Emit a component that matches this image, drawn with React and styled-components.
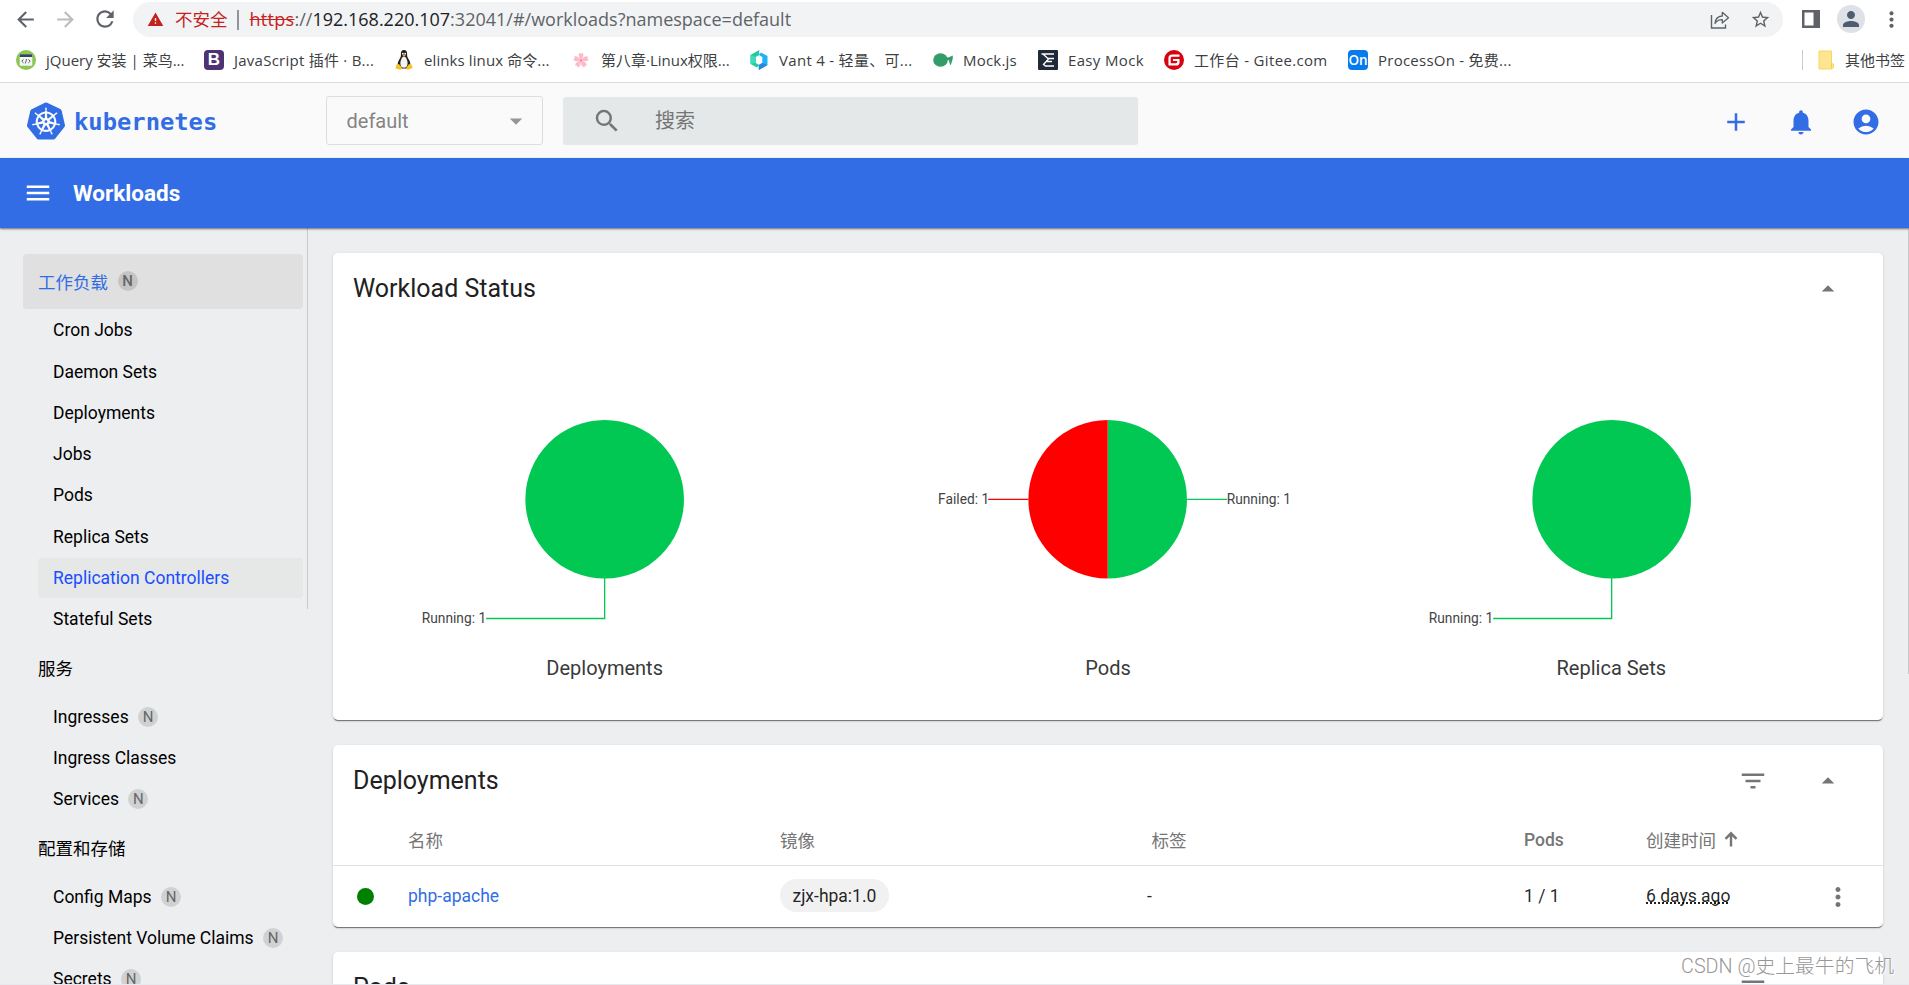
import styled, { createGlobalStyle, css } from "styled-components";
import {
  MdAccountCircle,
  MdAdd,
  MdArrowBack,
  MdArrowDropDown,
  MdArrowDropUp,
  MdArrowForward,
  MdFilterList,
  MdMenu,
  MdMoreVert,
  MdNotifications,
  MdPerson,
  MdRefresh,
  MdSearch,
  MdStarBorder,
  MdWarning,
} from "react-icons/md";
import { SiGitee, SiKubernetes } from "react-icons/si";

const GlobalStyle = createGlobalStyle`
  * {
    box-sizing: border-box;
  }

  body {
    margin: 0;
    overflow: hidden;
    font-family: Roboto, "Noto Sans CJK SC", sans-serif;
    font-size: 17.5px;
    color: rgba(0, 0, 0, 0.87);
  }

  svg {
    display: block;
    flex-shrink: 0;
  }
`;

const Page = styled.div`
  position: relative;
  width: 1909px;
  height: 985px;
  display: flex;
  flex-direction: column;
  overflow: hidden;
  background-color: #edeef0;
`;

/* ---------- browser ---------- */

const Browser = styled.div`
  flex-shrink: 0;
  height: 83px;
  background-color: #fff;
  border-bottom: 1px solid #d9dadb;
  font-family: "Open Sans", "Noto Sans CJK SC", sans-serif;
`;

const Toolbar = styled.div`
  height: 38px;
  padding-left: 5px;
  display: flex;
  align-items: center;
`;

const BrowserButton = styled.div`
  width: 40px;
  height: 38px;
  flex-shrink: 0;
  display: flex;
  justify-content: center;
  align-items: center;
  color: ${({ $disabled }) => ($disabled ? "#babcbe" : "#5f6368")};
`;

const Omnibox = styled.div`
  width: 1650px;
  height: 35px;
  flex-shrink: 0;
  margin: 1px 8px 0 8px;
  padding: 0 12px 0 14px;
  border-radius: 18px;
  display: flex;
  align-items: center;
  background-color: #f1f3f4;
  font-size: 17.5px;
  white-space: nowrap;
`;

const Insecure = styled.span`
  width: 62px;
  margin-left: 11px;
  padding-bottom: 2px;
  color: #c5221f;
`;

const OmniDivider = styled.span`
  width: 1.5px;
  height: 20px;
  margin-right: 11px;
  background-color: #909498;
`;

const Url = styled.span`
  flex: 1;
  padding-bottom: 2px;
  font-size: 18px;
  color: #5f6368;

  s {
    color: #c5221f;
    letter-spacing: 0.3px;
  }
  b {
    font-weight: 400;
    color: #202124;
  }
`;

const OmniIcons = styled.div`
  display: flex;
  align-items: center;
  gap: 20px;
  color: #5f6368;
`;

const Avatar = styled.div`
  width: 28px;
  height: 28px;
  border-radius: 50%;
  display: flex;
  justify-content: center;
  align-items: center;
  background-color: #dee1e6;
  color: #4e5b70;
`;

const BookmarkBar = styled.div`
  height: 44px;
  padding-left: 16px;
  display: flex;
  align-items: center;
  font-size: 15px;
  line-height: 20px;
  color: #3c4043;
  white-space: nowrap;
`;

const Bookmark = styled.div`
  width: ${({ $width }) => $width}px;
  flex-shrink: 0;
  display: flex;
  align-items: center;
  gap: 10px;
  letter-spacing: ${({ $track }) => $track || 0}px;
`;

const BookmarkText = styled.span`
  padding-bottom: 1px;
`;

const OtherBookmarks = styled.div`
  height: 20px;
  margin-left: auto;
  padding-left: 15px;
  padding-right: 4px;
  border-left: 1px solid #c9cbcd;
  display: flex;
  align-items: center;
  gap: 11px;
`;

const LetterIcon = styled.span`
  width: 20px;
  height: 20px;
  border-radius: 4px;
  display: flex;
  justify-content: center;
  align-items: center;
  letter-spacing: 0;
  color: #fff;
  background-color: ${({ $bg }) => $bg};
  font: ${({ $font }) => $font};
`;

/* ---------- dashboard header ---------- */

const Header = styled.header`
  flex-shrink: 0;
  height: 75px;
  padding: 0 28px 0 27px;
  display: flex;
  align-items: center;
  background-color: #fafafa;
`;

const Brand = styled.div`
  width: 299px;
  padding-top: 1px;
  display: flex;
  align-items: center;
  gap: 9px;
  color: #326de6;
  font-family: "DejaVu Sans Mono", monospace;
  font-weight: 700;
  font-size: 23.8px;
  line-height: 38px;

  span {
    padding-top: 1px;
  }
`;

const NamespaceSelect = styled.div`
  width: 217px;
  height: 49px;
  padding: 0 11px 0 19.5px;
  border: 1px solid #dedede;
  border-radius: 3px;
  display: flex;
  justify-content: space-between;
  align-items: center;
  font-size: 20px;
  color: #858585;

  svg {
    color: #969696;
  }
`;

const SearchBox = styled.div`
  width: 575px;
  height: 48px;
  margin-left: 20px;
  padding-left: 29px;
  border-radius: 3px;
  display: flex;
  align-items: center;
  gap: 33px;
  background-color: #e4e8e8;
  font-size: 20px;
  color: #757575;

  span {
    padding-bottom: 3px;
  }
`;

const HeaderActions = styled.div`
  margin-left: auto;
  padding-top: 2px;
  display: flex;
  gap: 35px;
  color: #326de6;
`;

const TitleBar = styled.div`
  position: relative;
  flex-shrink: 0;
  height: 70px;
  padding-left: 23px;
  display: flex;
  align-items: center;
  gap: 20px;
  background-color: #326de6;
  box-shadow: 0 1px 2px rgba(0, 0, 0, 0.55);
  color: #fff;

  h1 {
    margin: 0;
    font-size: 22.5px;
    font-weight: 700;
  }
`;

const Body = styled.div`
  flex: 1;
  min-height: 0;
  display: flex;
  overflow: hidden;
  border-bottom: 1px solid #e8e9ee;
`;

/* ---------- sidebar ---------- */

const Sidebar = styled.nav`
  width: 303px;
  flex-shrink: 0;
  padding: 26px 0 0 23px;
  display: flex;
  flex-direction: column;
  gap: 1.25px;
`;

const navItem = css`
  flex-shrink: 0;
  border-radius: 4px;
  padding-left: 15px;
  display: flex;
  align-items: center;
  gap: 9.5px;
  color: #000;
`;

const NavGroup = styled.div`
  ${navItem}
  height: 55px;
  ${({ $active }) =>
    $active &&
    css`
      padding-bottom: 1px;
      background-color: #e0e0e0;
      color: #326de6;
    `}
`;

const NavLink = styled.div`
  ${navItem}
  height: 40px;
  margin-left: 15px;
  ${({ $active }) =>
    $active &&
    css`
      background-color: #e5e8e7;
      color: #1a4dff;
    `}
`;

const Badge = styled.span`
  width: 20px;
  height: 20px;
  border-radius: 50%;
  display: flex;
  justify-content: center;
  align-items: center;
  background-color: rgba(0, 0, 0, 0.12);
  color: #666;
  font-size: 15px;
  font-weight: ${({ $strong }) => ($strong ? 500 : 400)};
`;

const Track = styled.div`
  flex-shrink: 0;
  width: 1px;
  height: ${({ $height }) => $height}px;
  margin-left: ${({ $gap }) => $gap}px;
  background-color: #c6c8ca;
`;

/* ---------- cards ---------- */

const Content = styled.main`
  flex: 1;
  padding: 25px 25px 0;
  display: flex;
  flex-direction: column;
  gap: 25px;
`;

const Card = styled.section`
  flex-shrink: 0;
  border-radius: 5px;
  background-color: #fff;
  box-shadow: 0 2px 1px -1px rgba(0, 0, 0, 0.4), 0 1px 1px rgba(0, 0, 0, 0.14),
    0 1px 3px rgba(0, 0, 0, 0.12);
`;

const CardHeader = styled.div`
  height: 70px;
  padding: 1.5px 40px 0 20px;
  display: flex;
  align-items: center;
  gap: 45px;
  color: #757575;

  h2 {
    flex: 1;
    margin: 0;
    font-size: 25px;
    font-weight: 400;
    color: #212121;
  }
`;

const Charts = styled.div`
  height: 397px;
  padding: 0 20px;
  display: grid;
  grid-template-columns: repeat(3, 1fr);
`;

const Chart = styled.figure`
  margin: 0;
  display: flex;
  flex-direction: column;
  align-items: center;

  svg {
    width: 100%;
    height: 330px;
  }
  text {
    font-size: 13.75px;
    fill: #444;
  }
  figcaption {
    font-size: 20px;
    line-height: 30px;
    color: #3a3a3a;
  }
`;

const Row = styled.div`
  height: ${({ $head }) => ($head ? 51 : 61)}px;
  display: grid;
  grid-template-columns: 75px 372px 371.5px 372.5px 122px 1fr 45px;
  align-items: center;
  ${({ $head }) =>
    $head &&
    css`
      border-bottom: 1px solid #e0e0e0;
      color: #757575;
    `}
`;

const HeadCell = styled.div`
  padding-bottom: ${({ $cjk }) => ($cjk ? 2 : 0)}px;
  display: flex;
  align-items: center;
  gap: 8px;
  font-weight: ${({ $cjk }) => ($cjk ? 400 : 500)};
`;

const Status = styled.span`
  width: 17px;
  height: 17px;
  margin-left: 24px;
  border-radius: 50%;
  background-color: green;
`;

const Name = styled.a`
  padding-bottom: 2px;
  color: #326de6;
`;

const Chip = styled.span`
  justify-self: start;
  height: 33px;
  margin-bottom: 2px;
  padding: 0 12.5px;
  border-radius: 17px;
  display: flex;
  align-items: center;
  background-color: #f1f1f1;
`;

const Label = styled.span`
  margin-left: -4.5px;
  padding-bottom: 2px;
`;

const PodCount = styled.span`
  padding-bottom: 2px;
`;

const Age = styled.span`
  justify-self: start;
  padding-bottom: 2px;
  text-decoration: underline dotted;
  text-decoration-thickness: 2px;
  text-underline-offset: 1px;
  text-decoration-skip-ink: none;
`;

const More = styled.div`
  margin-left: -15px;
  color: #757575;
`;

const Watermark = styled.div`
  position: absolute;
  right: 15px;
  bottom: 6px;
  font-size: 19.8px;
  font-weight: 300;
  color: #989898;
  text-shadow: 1px 1px 0 #fff;
`;

const GREEN = "#00c853";
const RED = "#ff0000";

const groups = [
  {
    title: "工作负载",
    badge: true,
    active: true,
    items: [
      { name: "Cron Jobs" },
      { name: "Daemon Sets" },
      { name: "Deployments" },
      { name: "Jobs" },
      { name: "Pods" },
      { name: "Replica Sets" },
      { name: "Replication Controllers", active: true },
      { name: "Stateful Sets" },
    ],
  },
  {
    title: "服务",
    items: [
      { name: "Ingresses", badge: true },
      { name: "Ingress Classes" },
      { name: "Services", badge: true },
    ],
  },
  {
    title: "配置和存储",
    items: [
      { name: "Config Maps", badge: true },
      { name: "Persistent Volume Claims", badge: true },
      { name: "Secrets", badge: true },
    ],
  },
];

const JqueryIcon = () => (
  <svg width="20" height="20" viewBox="0 0 20 20">
    <circle cx="10" cy="10" r="10" fill="#8bc652" />
    <rect x="3.7" y="4.3" width="12.6" height="11.4" rx="1" fill="#f4f6f4" />
    <path d="M3.7 7V5.3a1 1 0 0 1 1-1h10.6a1 1 0 0 1 1 1V7z" fill="#31485a" />
    <path
      d="M7.6 9.5 5.8 11.2l1.8 1.7M12.4 9.5l1.8 1.7-1.8 1.7M10.7 9l-1.4 4.5"
      fill="none"
      stroke="#59656e"
      strokeWidth="1"
    />
  </svg>
);

const TuxIcon = () => (
  <svg width="20" height="20" viewBox="0 0 20 20">
    <path
      d="M10 0c-2.4 0-3.3 1.8-3.1 4 .2 2.600-.4 3.300-1.600 5.400-1.200 2.100-2 4.300-1.500 6.600l3 2.500h6.400l3-2.500c.5-2.300-.2-4.600-1.500-6.700C13.400 7.300 13 6.400 13.100 4 13.200 1.800 12.400 0 10 0z"
      fill="#20211f"
    />
    <path
      d="M10 6.500c1.500 0 2.200 1.500 3 3.500.9 2.300.9 5.300-.6 6.900-1.300 1-3.600 1-4.800 0C6.100 15.300 6 12.400 7 10c.8-2 1.500-3.500 3-3.500z"
      fill="#f3f3f1"
    />
    <circle cx="8.8" cy="3.7" r=".9" fill="#fff" />
    <circle cx="11.2" cy="3.7" r=".9" fill="#fff" />
    <path d="M8.300 5.100 10 4.400l1.900.8-1.900 1.300z" fill="#f5b916" />
    <path
      d="M2.500 14.500l2.400-.6 2.900 3.500c.5 1.300-.3 2.200-1.600 2.400L1.500 18.500zM17.500 14.500l-2.400-.6-2.600 3.500c-.6 1.300.2 2.200 1.500 2.400l4.700-1.800z"
      fill="#f7c325"
    />
  </svg>
);

const SakuraIcon = () => (
  <svg width="20" height="20" viewBox="0 0 20 20">
    {[0, 72, 144, 216, 288].map((angle) => (
      <path
        key={angle}
        d="M10 9.600C7.300 7.400 6.900 4.500 8.700 2.700L10 3.800l1.300-1.100C13.100 4.500 12.700 7.400 10 9.600z"
        fill="#ffb9c8"
        transform={`rotate(${angle} 10 10.4)`}
      />
    ))}
    <circle cx="10" cy="10.4" r="1.3" fill="#f58ca5" />
  </svg>
);

const VantIcon = () => (
  <svg width="20" height="20" viewBox="0 0 20 20">
    <path d="M10.200 0v5L6.700 7v6l3.500 2-2.200 2.500-6.500-3.600V5z" fill="#25c9a0" />
    <path d="M1.500 5 6.700 7v6l-5.200 1z" fill="#3fdcb9" />
    <path d="M9.800 20v-5l3.500-2V7l-3.500-2L12 2.500l6.500 3.600V15z" fill="#1fb2f5" />
    <path d="M18.500 15 13.300 13l-3.500 2v5z" fill="#2e86d8" />
  </svg>
);

const MockIcon = () => (
  <svg width="20" height="20" viewBox="0 0 20 20">
    <ellipse cx="7.5" cy="10" rx="7.3" ry="6.7" fill="#349c68" />
    <path
      d="M12 7.200c1.400-.4 2.600.5 3.300.4l4.500-2.200v3.200l-2.100 6.800-1.400-2.800-.3-2.500-3.500.9z"
      fill="#349c68"
    />
  </svg>
);

const EasyMockIcon = () => (
  <svg width="20" height="20" viewBox="0 0 20 20">
    <rect width="20" height="20" rx="1" fill="#202b3a" />
    <path
      d="M3.500 4h12.500M5.500 4.500l5 4.500-5 5.500 2 1.500H16M9.500 8.500H16M9 11.500h5"
      fill="none"
      stroke="#fff"
      strokeWidth="1.3"
    />
  </svg>
);

const FolderIcon = () => (
  <svg width="16" height="20" viewBox="0 0 16 20">
    <path d="M1 1h12.500v12.500l2 .5v3.500l-1.500 1.500H1z" fill="#ffe591" stroke="#f8d75c" />
    <path d="M13.500 13v5.500" fill="none" stroke="#f3cb45" />
  </svg>
);

const ShareIcon = () => (
  <svg width="20" height="20" viewBox="0 0 20 20" fill="none" stroke="currentColor">
    <path d="M1.500 5v13h14v-3.500" strokeWidth="1.4" />
    <path
      d="M5 13.500C5.300 9 8 6.300 12.300 6V2.300l6.200 5.500-6.200 5.300V9.700C9 9.700 6.500 11 5 13.500z"
      strokeWidth="1.3"
      strokeLinejoin="round"
    />
  </svg>
);

const SidePanelIcon = () => (
  <svg width="18" height="18" viewBox="0 0 18 18">
    <path d="M0 0h18v18H0zM2.500 2.500v13h9v-13z" fill="#5f6368" fillRule="evenodd" />
  </svg>
);

const SortArrow = () => (
  <svg width="14" height="16" viewBox="0 0 14 16">
    <path
      d="M7 15.500V2.500M1.500 7.800 7 2.300l5.500 5.500"
      fill="none"
      stroke="currentColor"
      strokeWidth="2.4"
    />
  </svg>
);

const bookmarks = [
  { icon: <JqueryIcon />, text: "jQuery 安装 | 菜鸟...", width: 188 },
  {
    icon: (
      <LetterIcon $bg="#4d3376" $font='700 17px/20px "Liberation Sans", sans-serif'>
        B
      </LetterIcon>
    ),
    text: "JavaScript 插件 · B...",
    width: 190,
    track: 0.25,
  },
  { icon: <TuxIcon />, text: "elinks linux 命令...", width: 177, track: 0.1 },
  { icon: <SakuraIcon />, text: "第八章·Linux权限...", width: 178 },
  { icon: <VantIcon />, text: "Vant 4 - 轻量、可...", width: 184, track: 0.3 },
  { icon: <MockIcon />, text: "Mock.js", width: 105, track: 0.2 },
  { icon: <EasyMockIcon />, text: "Easy Mock", width: 126, track: 0.35 },
  {
    icon: <SiGitee size={20} color="#d8020f" />,
    text: "工作台 - Gitee.com",
    width: 184,
    track: 0.33,
  },
  {
    icon: (
      <LetterIcon $bg="#067bef" $font='600 13.5px/20px "Open Sans", sans-serif'>
        On
      </LetterIcon>
    ),
    text: "ProcessOn - 免费...",
    width: 180,
    track: 0.25,
  },
];

// Width 503 is one third of the card body, so x = 251.5 is the cell centre.
const FullPie = ({ title }) => (
  <Chart>
    <svg viewBox="0 0 503 330">
      <circle cx="251.5" cy="176.3" r="79.3" fill={GREEN} />
      <path d="M251.500 255v40.500H133" fill="none" stroke={GREEN} strokeWidth="1.3" />
      <text x="133" y="300" textAnchor="end">
        Running: 1
      </text>
    </svg>
    <figcaption>{title}</figcaption>
  </Chart>
);

const SplitPie = ({ title }) => (
  <Chart>
    <svg viewBox="0 0 503 330">
      <path d="M251.500 97a79.300 79.300 0 0 1 0 158.600z" fill={GREEN} />
      <path d="M251.500 97a79.300 79.300 0 0 0 0 158.600z" fill={RED} />
      <path d="M331 176.300h40" stroke={GREEN} strokeWidth="1.3" />
      <path d="M172 176.300h-40" stroke={RED} strokeWidth="1.3" />
      <text x="370.5" y="181">
        Running: 1
      </text>
      <text x="133" y="181" textAnchor="end">
        Failed: 1
      </text>
    </svg>
    <figcaption>{title}</figcaption>
  </Chart>
);

const BrowserChrome = () => (
  <Browser>
    <Toolbar>
      <BrowserButton>
        <MdArrowBack size={25} />
      </BrowserButton>
      <BrowserButton $disabled>
        <MdArrowForward size={25} />
      </BrowserButton>
      <BrowserButton>
        <MdRefresh size={26} />
      </BrowserButton>
      <Omnibox>
        <MdWarning size={17} color="#c5221f" />
        <Insecure>不安全</Insecure>
        <OmniDivider />
        <Url>
          <s>https</s>://<b>192.168.220.107</b>:32041/#/workloads?namespace=default
        </Url>
        <OmniIcons>
          <ShareIcon />
          <MdStarBorder size={21} />
        </OmniIcons>
      </Omnibox>
      <BrowserButton>
        <SidePanelIcon />
      </BrowserButton>
      <BrowserButton>
        <Avatar>
          <MdPerson size={24} />
        </Avatar>
      </BrowserButton>
      <BrowserButton>
        <MdMoreVert size={25} />
      </BrowserButton>
    </Toolbar>
    <BookmarkBar>
      {bookmarks.map((bookmark) => (
        <Bookmark key={bookmark.text} $width={bookmark.width} $track={bookmark.track}>
          {bookmark.icon}
          <BookmarkText>{bookmark.text}</BookmarkText>
        </Bookmark>
      ))}
      <OtherBookmarks>
        <FolderIcon />
        <BookmarkText>其他书签</BookmarkText>
      </OtherBookmarks>
    </BookmarkBar>
  </Browser>
);

const App = () => {
  return (
    <Page>
      <GlobalStyle />
      <BrowserChrome />
      <Header>
        <Brand>
          <SiKubernetes size={38} />
          <span>kubernetes</span>
        </Brand>
        <NamespaceSelect>
          default
          <MdArrowDropDown size={30} />
        </NamespaceSelect>
        <SearchBox>
          <MdSearch size={30} />
          <span>搜索</span>
        </SearchBox>
        <HeaderActions>
          <MdAdd size={30} />
          <MdNotifications size={30} />
          <MdAccountCircle size={30} />
        </HeaderActions>
      </Header>
      <TitleBar>
        <MdMenu size={30} />
        <h1>Workloads</h1>
      </TitleBar>
      <Body>
        <Sidebar>
          {groups.map((group) => [
            <NavGroup key={group.title} $active={group.active}>
              {group.title}
              {group.badge && <Badge $strong>N</Badge>}
            </NavGroup>,
            ...group.items.map((item) => (
              <NavLink key={item.name} $active={item.active}>
                {item.name}
                {item.badge && <Badge>N</Badge>}
              </NavLink>
            )),
          ])}
        </Sidebar>
        <Track $height={381} $gap={4} />
        <Content>
          <Card>
            <CardHeader>
              <h2>Workload Status</h2>
              <MdArrowDropUp size={30} />
            </CardHeader>
            <Charts>
              <FullPie title="Deployments" />
              <SplitPie title="Pods" />
              <FullPie title="Replica Sets" />
            </Charts>
          </Card>
          <Card>
            <CardHeader>
              <h2>Deployments</h2>
              <MdFilterList size={30} />
              <MdArrowDropUp size={30} />
            </CardHeader>
            <Row $head>
              <span />
              <HeadCell $cjk>名称</HeadCell>
              <HeadCell $cjk>镜像</HeadCell>
              <HeadCell $cjk>标签</HeadCell>
              <HeadCell>Pods</HeadCell>
              <HeadCell $cjk>
                创建时间
                <SortArrow />
              </HeadCell>
              <span />
            </Row>
            <Row>
              <Status />
              <Name>php-apache</Name>
              <Chip>zjx-hpa:1.0</Chip>
              <Label>-</Label>
              <PodCount>1 / 1</PodCount>
              <Age>6 days ago</Age>
              <More>
                <MdMoreVert size={30} />
              </More>
            </Row>
          </Card>
          <Card>
            <CardHeader>
              <h2>Pods</h2>
              <MdFilterList size={30} />
              <MdArrowDropUp size={30} />
            </CardHeader>
          </Card>
        </Content>
        <Track $height={446} $gap={0} />
      </Body>
      <Watermark>CSDN @史上最牛的飞机</Watermark>
    </Page>
  );
};

export default App;
